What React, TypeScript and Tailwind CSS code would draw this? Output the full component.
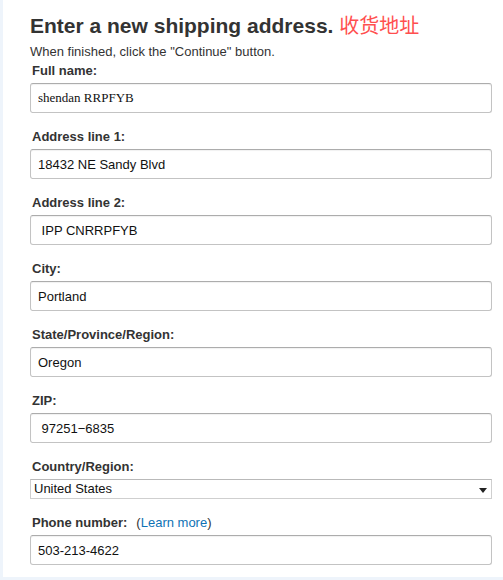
import { useState } from 'react';

type Field = { label: string; value: string; serif?: boolean };

const fields: Field[] = [
  { label: 'Full name:', value: 'shendan RRPFYB', serif: true },
  { label: 'Address line 1:', value: '18432 NE Sandy Blvd' },
  { label: 'Address line 2:', value: ' IPP CNRRPFYB' },
  { label: 'City:', value: 'Portland' },
  { label: 'State/Province/Region:', value: 'Oregon' },
  { label: 'ZIP:', value: ' 97251\u22126835' },
];

const inputCls =
  'block w-[462px] h-[30px] px-[7px] border border-[#c3c3c3] border-t-[#acacac] rounded-[3px] bg-white text-[13px] text-[#111] shadow-[inset_0_1px_1px_rgba(0,0,0,0.06)] outline-none';

function TextField({ field }: { field: Field }) {
  const [val, setVal] = useState(field.value);
  return (
    <div className="mt-4 first:mt-0">
      <label className="block h-4 leading-4 mb-1 pl-[2px] text-[13px] font-bold text-[#333]">{field.label}</label>
      <input
        value={val}
        onChange={(e) => setVal(e.target.value)}
        className={inputCls}
        style={{ fontFamily: field.serif ? '"Liberation Serif", serif' : '"Liberation Sans", Arial, sans-serif', whiteSpace: 'pre' }}
      />
    </div>
  );
}

export default function App() {
  const [phone, setPhone] = useState('503-213-4622');
  return (
    <div className="w-[503px] h-[580px] bg-[#eef4fb] overflow-hidden" style={{ fontFamily: '"Liberation Sans", Arial, sans-serif' }}>
      <div className="ml-[3px] h-[577px] bg-white pl-[27px] pt-[13px]">
        <h1 className="h-6 leading-6 text-[21px] font-bold text-[#333] whitespace-nowrap">
          Enter a new shipping address.{' '}
          <span className="font-normal text-[20px] text-[#ff4f4f]" style={{ fontFamily: '"Noto Sans CJK SC", sans-serif' }}>收货地址</span>
        </h1>
        <p className="mt-[7px] h-4 leading-4 text-[13px] text-[#333]">When finished, click the "Continue" button.</p>

        <form className="mt-[3px]" onSubmit={(e) => e.preventDefault()}>
          {fields.map((f) => <TextField key={f.label} field={f} />)}

          <div className="mt-4">
            <label className="block h-4 leading-4 mb-1 pl-[2px] text-[13px] font-bold text-[#333]">Country/Region:</label>
            <div className="relative w-[462px] h-5 border border-[#cfcfcf] border-t-[#b9b9b9] bg-white flex items-center pl-[3px] text-[13px] text-[#111]">
              United States
              <svg className="absolute right-[4px] top-[8px]" width="8" height="5" viewBox="0 0 8 5">
                <path d="M0 0h8L4 5z" fill="#222" />
              </svg>
            </div>
          </div>

          <div className="mt-4">
            <label className="block h-4 leading-4 mb-1 pl-[2px] text-[13px] text-[#333]">
              <span className="font-bold">Phone number:</span>
              <span className="ml-[9px]">(<a href="#" className="text-[#0e72b5]">Learn more</a>)</span>
            </label>
            <input value={phone} onChange={(e) => setPhone(e.target.value)} className={inputCls} style={{ fontFamily: '"Liberation Sans", Arial, sans-serif' }} />
          </div>
        </form>
      </div>
    </div>
  );
}
